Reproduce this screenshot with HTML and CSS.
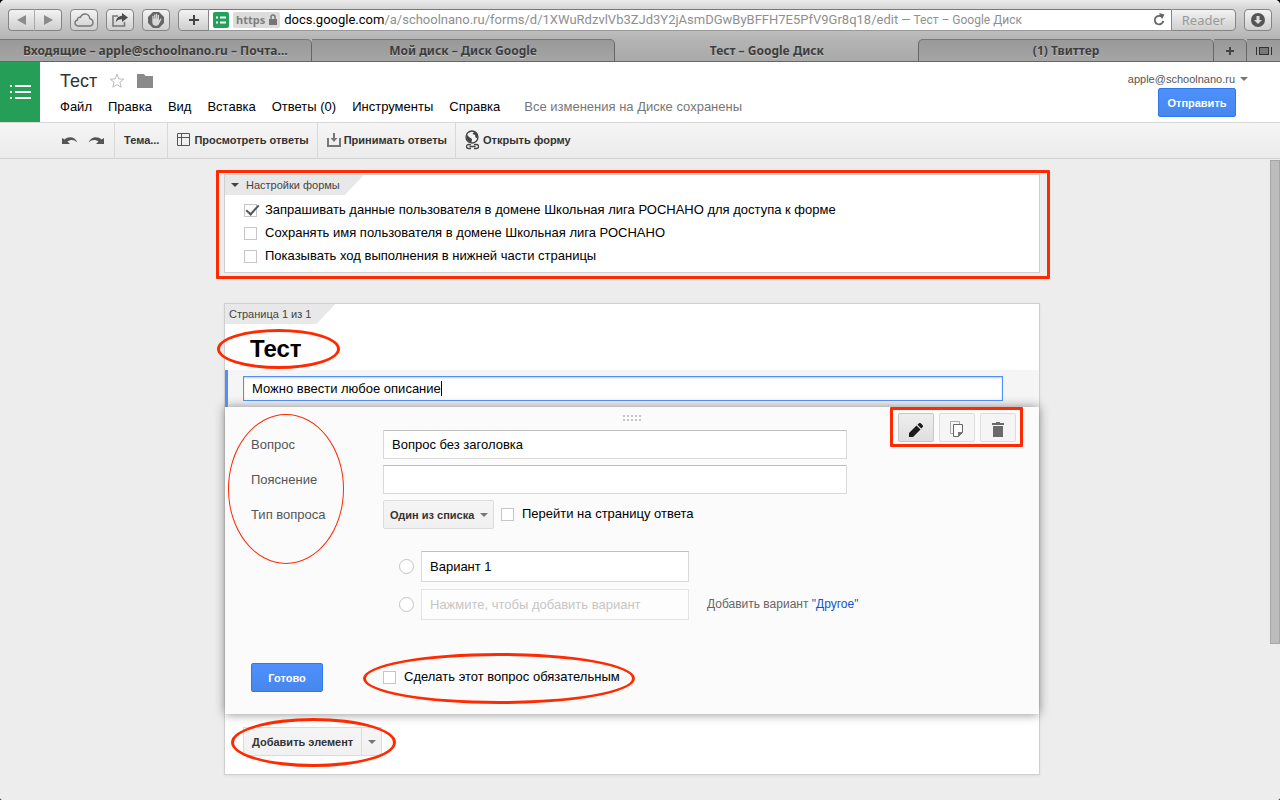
FILE: index.html
```html
<!DOCTYPE html>
<html lang="ru">
<head>
<meta charset="utf-8">
<meta name="viewport" content="width=device-width, initial-scale=1">
<title>Тест – Google Диск</title>
<link rel="stylesheet" href="styles.css">
</head>
<body>
<div class="window">
  <header class="browser">
    <div class="browser-bar">
      <div class="nav-pair">
        <button class="chrome-btn nav-back" aria-label="Назад"><svg width="10" height="10" viewBox="0 0 10 10"><path d="M9 0v10L0 5z" fill="#8b8b8b"/></svg></button>
        <button class="chrome-btn nav-forward" aria-label="Вперёд"><svg width="10" height="10" viewBox="0 0 10 10"><path d="M1 0v10l9-5z" fill="#8b8b8b"/></svg></button>
      </div>
      <button class="chrome-btn solo" aria-label="iCloud"><svg width="20" height="14" viewBox="0 0 20 14" fill="none" stroke="#777" stroke-width="1.4"><path d="M4.500 13C2.200 13 1 11.500 1 10c0-1.700 1-2.800 2.500-3-.2-2 1.300-3 3-2.600C7.300 2 9 1 11 1c2.800 0 4.700 2 4.700 4.600C17.800 6 19 7.500 19 9.300 19 11.500 17.500 13 15.500 13z"/></svg></button>
      <button class="chrome-btn solo" aria-label="Поделиться"><svg width="18" height="14" viewBox="0 0 18 14"><path d="M7 3H2v10h11.500V9" fill="none" stroke="#777" stroke-width="1.600"/><path d="M11 0l6 4.500-6 4.500V6.300C8 6.200 6 7.200 4.800 9.700 5 5.500 7 3 11 2.700z" fill="#4d4d4d"/></svg></button>
      <button class="chrome-btn solo" aria-label="Блокировка"><svg width="16" height="16" viewBox="0 0 16 16"><path d="M5 0h6l5 5v6l-5 5H5l-5-5V5z" fill="#666"/><path d="M4.300 8.500v-4a.6.6 0 0 1 1.300 0V7h.5V3a.6.6 0 0 1 1.300 0v3.500h.5V2.300a.6.6 0 0 1 1.300 0v4.200h.5V3.300a.6.6 0 0 1 1.300 0v5.200l1.200-1.600c.6-.7 1.600-.1 1.200.7L11 12c-.6 1.200-1.500 1.800-3 1.800-2.500 0-3.700-1.500-3.700-3.800z" fill="#d8d8d8"/></svg></button>
      <div class="address">
        <button class="chrome-btn add-bookmark" aria-label="Добавить закладку"><svg width="10" height="10" viewBox="0 0 10 10"><path d="M5 0v10M0 5h10" stroke="#444" stroke-width="2"/></svg></button>
        <div class="url">
          <svg class="site-icon" width="16" height="16" viewBox="0 0 16 16"><rect width="16" height="16" rx="2" fill="#23a05a"/><path d="M3 5.500h2M7 5.500h6M3 10.500h2M7 10.500h6" stroke="#fff" stroke-width="2"/></svg>
          <span class="secure">https <svg width="8" height="11" viewBox="0 0 8 11"><path d="M2 5V3a2 2 0 0 1 4 0v2" fill="none" stroke="#777" stroke-width="1.500"/><rect y="5" width="8" height="6" fill="#777"/></svg></span>
          <span class="url-text"><b>docs.google.com</b>/a/schoolnano.ru/forms/d/1XWuRdzvlVb3ZJd3Y2jAsmDGwByBFFH7E5PfV9Gr8q18/edit<span class="url-title"> — Тест – Google Диск</span></span>
          <button class="reload" aria-label="Обновить"><svg width="12" height="13" viewBox="0 0 12 13"><path d="M9.300 4.200A4.300 4.300 0 1 0 10.300 8" fill="none" stroke="#666" stroke-width="1.800"/><path d="M6 0l5.500 1.500L9 6z" fill="#666"/></svg></button>
        </div>
        <button class="chrome-btn reader">Reader</button>
      </div>
      <button class="chrome-btn solo" aria-label="Загрузки"><svg width="14" height="14" viewBox="0 0 14 14"><circle cx="7" cy="7" r="7" fill="#555"/><path d="M5.500 3h3v4H11l-4 4-4-4h2.500z" fill="#ddd"/></svg></button>
    </div>
    <nav class="tabs">
      <button class="tab first right-edge">Входящие – apple@schoolnano.ru – Почта…</button>
      <button class="tab right-edge">Мой диск – Диск Google</button>
      <button class="tab current">Тест – Google Диск</button>
      <button class="tab last left-edge right-edge">(1) Твиттер</button>
      <button class="tab tab-tool right-edge" aria-label="Новая вкладка"><svg width="8" height="8" viewBox="0 0 8 8"><path d="M4 0v8M0 4h8" stroke="#444" stroke-width="2"/></svg></button>
      <button class="tab tab-tool" aria-label="Все вкладки"><svg width="16" height="8" viewBox="0 0 16 8"><path d="M3 0h10v8H3z" fill="#777"/><path d="M3 .5h10M3 7.500h10M3.500 0v8M12.500 0v8M.5 0v8M15.500 0v8" stroke="#333"/></svg></button>
    </nav>
  </header>

  <header class="app-head">
    <a class="logo" href="#" aria-label="Формы"><svg width="22" height="16" viewBox="0 0 22 16"><path d="M1 2h2M6 2h16M1 8h2M6 8h16M1 14h2M6 14h16" stroke="#fff" stroke-width="2"/></svg></a>
    <div class="doc">
      <div class="doc-title">
        <h1>Тест</h1>
        <button class="icon-btn" aria-label="Пометить"><svg width="16" height="16" viewBox="0 0 16 16"><path d="M8 1.200l1.800 4.700 5 .3-3.900 3.100 1.300 4.900L8 11.500l-4.200 2.700 1.300-4.900L1.200 6.200l5-.3z" fill="none" stroke="#bbb"/></svg></button>
        <button class="icon-btn" aria-label="Папка"><svg width="16" height="14" viewBox="0 0 16 14"><path d="M0 0h7l1.500 2H16v12H0z" fill="#8a8a8a"/></svg></button>
      </div>
      <nav class="menu">
        <button>Файл</button><button>Правка</button><button>Вид</button><button>Вставка</button><button>Ответы (0)</button><button>Инструменты</button><button>Справка</button>
        <span class="saved">Все изменения на Диске сохранены</span>
      </nav>
    </div>
    <div class="account">
      <button class="user">apple@schoolnano.ru <i class="arrow"></i></button>
      <button class="primary send">Отправить</button>
    </div>
  </header>

  <div class="toolbar">
    <div class="tool-group history">
      <button class="icon-btn" aria-label="Отменить"><svg width="16" height="10" viewBox="0 0 16 10"><path d="M0 2l2.500 1.500C6 0 13 0 15.500 6.500 12 3 8 3.500 5.500 5.500L8 8H0z" fill="#555"/></svg></button>
      <button class="icon-btn" aria-label="Повторить"><svg width="16" height="10" viewBox="0 0 16 10"><path d="M16 2l-2.500 1.500C10 0 3 0 .5 6.500 4 3 8 3.500 10.500 5.500L8 8h8z" fill="#555"/></svg></button>
    </div>
    <button class="tool">Тема...</button>
    <button class="tool"><svg width="14" height="14" viewBox="0 0 14 14"><path d="M.5.5h12v12H.5zM.5 4.500h12M4.500.5v12" fill="none" stroke="#555"/></svg>Просмотреть ответы</button>
    <button class="tool"><svg width="14" height="14" viewBox="0 0 14 14"><path d="M1 5v8h12V5" fill="none" stroke="#777" stroke-width="2"/><path d="M7 0v6" stroke="#777" stroke-width="2"/><path d="M3.500 5h7L7 9z" fill="#777"/></svg>Принимать ответы</button>
    <button class="tool"><svg width="15" height="20" viewBox="0 0 15 20"><circle cx="7" cy="7" r="6" fill="#f3f3f3" stroke="#444" stroke-width="1.300"/><path d="M1.500 4L4 7l3 2-.5 3.500C3 12 .8 9 1.500 4zM5 1.200h4.500L7.500 4 10 5l.5 2.500 2 1L13 5 10.500 1.800z" fill="#444"/><path d="M6 14.500H3.500a2 2 0 0 0 0 4H6M9 14.500h2.500a2 2 0 0 1 0 4H9M4.500 16.500h6" fill="none" stroke="#f3f3f3" stroke-width="3"/><path d="M6 14.500H3.500a2 2 0 0 0 0 4H6M9 14.500h2.500a2 2 0 0 1 0 4H9M4.500 16.500h6" fill="none" stroke="#444" stroke-width="1.300"/></svg>Открыть форму</button>
  </div>

  <div class="workspace">
    <main class="canvas">
      <section class="card settings">
        <button class="corner-tab toggle"><i class="arrow dark"></i>Настройки формы</button>
        <div class="setting-list">
          <label class="check"><input type="checkbox" checked><span>Запрашивать данные пользователя в домене Школьная лига РОСНАНО для доступа к форме</span></label>
          <label class="check"><input type="checkbox"><span>Сохранять имя пользователя в домене Школьная лига РОСНАНО</span></label>
          <label class="check"><input type="checkbox"><span>Показывать ход выполнения в нижней части страницы</span></label>
        </div>
        <span class="mark mark-settings"></span>
      </section>

      <section class="card page">
        <div class="corner-tab page-no">Страница 1 из 1</div>
        <h2 class="form-title"><span>Тест<span class="mark mark-title"></span></span></h2>
        <div class="description">
          <input type="text" aria-label="Описание" value="Можно ввести любое описание">
          <span class="caret"></span>
        </div>

        <div class="editor">
          <svg class="grip" width="18" height="6" viewBox="0 0 18 6"><path d="M0 1h18M0 5h18" stroke="#c4c4c4" stroke-width="2" stroke-dasharray="2 2"/></svg>
          <div class="actions">
            <button class="action pressed" aria-label="Изменить"><svg width="14" height="14" viewBox="0 0 14 14"><path d="M0 14v-4l7.500-7.500 4 4L4 14zM8.500 1.700L10 .3c.6-.4 1.200-.4 1.700 0l2 2c.4.500.4 1.100 0 1.700l-1.400 1.400z" fill="#1b1b1b"/></svg></button>
            <button class="action" aria-label="Создать копию"><svg width="14" height="17" viewBox="0 0 14 17"><path d="M3 12.500H.5V.5h9V3" fill="none" stroke="#aaa"/><path d="M3.500 3.500h9v8l-4 4h-5z" fill="#fff" stroke="#666"/><path d="M8 11h5l-5 5z" fill="#777"/></svg></button>
            <button class="action" aria-label="Удалить"><svg width="12" height="15" viewBox="0 0 12 15"><path d="M4 0h4v1h4v2H0V1h4zM1 4h10v11H1z" fill="#6b6b6b"/></svg></button>
            <span class="mark mark-actions"></span>
          </div>

          <div class="fields">
            <div class="field"><label for="question">Вопрос</label><input id="question" type="text" value="Вопрос без заголовка"></div>
            <div class="field"><label for="hint">Пояснение</label><input id="hint" type="text"></div>
            <div class="field"><label for="kind">Тип вопроса</label>
              <span class="select-wrap"><select id="kind"><option>Один из списка</option></select><i class="arrow"></i></span>
              <label class="check jump"><input type="checkbox"><span>Перейти на страницу ответа</span></label>
            </div>
            <span class="mark mark-labels"></span>
          </div>

          <div class="choices">
            <div class="choice"><input type="radio" name="choice" aria-label="Вариант 1"><input type="text" aria-label="Текст варианта 1" value="Вариант 1"></div>
            <div class="choice"><input type="radio" name="choice" aria-label="Новый вариант"><input class="ghost" type="text" aria-label="Новый вариант" placeholder="Нажмите, чтобы добавить вариант">
              <span class="other">Добавить вариант <a href="#">"Другое"</a></span></div>
          </div>

          <div class="finish">
            <button class="primary done">Готово</button>
            <label class="check required"><input type="checkbox"><span>Сделать этот вопрос обязательным</span><span class="mark mark-required"></span></label>
          </div>
        </div>

        <div class="add-row">
          <div class="split">
            <button class="split-main">Добавить элемент</button><button class="split-more" aria-label="Выбрать тип элемента"><i class="arrow"></i></button>
            <span class="mark mark-add"></span>
          </div>
        </div>
      </section>
    </main>
    <div class="scroll-track"><div class="scroll-thumb"></div></div>
  </div>
</div>
</body>
</html>
```
FILE: styles.css
```css
* { box-sizing: border-box; }
html { background: #000; }
body {
  margin: 0;
  font-family: "Liberation Sans", Arial, sans-serif;
  font-size: 13px;
  line-height: 16px;
  color: #000;
}
button, input, select { font: inherit; color: inherit; margin: 0; }
button { padding: 0; border: 0; background: none; white-space: nowrap; }
svg { display: block; flex: none; }

.window {
  min-height: 100vh;
  display: flex;
  flex-direction: column;
  background: #ededed;
  border-radius: 5px 5px 2px 2px;
  overflow: hidden;
}

/* Browser chrome */
.browser {
  background: linear-gradient(#ececec, #d8d8d8 8px, #b4b4b4 39px, #a9a9a9);
  font-family: "Noto Sans", sans-serif;
}
.browser-bar {
  height: 39px;
  display: flex;
  align-items: center;
  gap: 8px;
  padding: 0 8px;
}
.chrome-btn {
  height: 22px;
  display: flex;
  align-items: center;
  justify-content: center;
  border: 1px solid #858585;
  border-radius: 4px;
  background: linear-gradient(#f3f3f3, #cfcfcf);
}
.nav-pair { display: flex; }
.nav-pair .chrome-btn { width: 27px; }
.nav-pair .nav-back { border-radius: 4px 0 0 4px; border-right-color: #aaa; }
.nav-pair .nav-forward { border-radius: 0 4px 4px 0; border-left: 0; }
.solo { width: 28px; }
.address { flex: 1; display: flex; min-width: 0; }
.add-bookmark { width: 31px; border-radius: 4px 0 0 4px; }
.url {
  flex: 1;
  min-width: 0;
  display: flex;
  align-items: center;
  gap: 4px;
  padding: 0 6px 0 4px;
  border-top: 1px solid #777;
  border-bottom: 1px solid #999;
  background: #fff;
}
.secure {
  display: flex;
  align-items: center;
  gap: 4px;
  height: 16px;
  padding: 0 3px;
  border-radius: 2px;
  background: #dcdcdc;
  color: #808080;
  font-size: 11px;
  font-weight: bold;
}
.url-text {
  flex: 1;
  overflow: hidden;
  white-space: nowrap;
  color: #8f8f8f;
  font-family: Roboto, "Noto Sans", sans-serif;
  font-size: 13px;
}
.url-text b { font-weight: normal; color: #000; }
.url-title { font-size: 12px; }
.reader { width: 65px; border-radius: 0 4px 4px 0; color: #999; font-size: 13px; }

.tabs { display: flex; height: 23px; border-bottom: 1px solid #666; }
.tab {
  flex: 304 1 0;
  min-width: 0;
  display: flex;
  align-items: center;
  justify-content: center;
  border-top: 1px solid #777;
  background: linear-gradient(#999, #a5a5a5);
  color: #3d3d3d;
  font-size: 12px;
  font-weight: bold;
  text-shadow: 0 1px 0 #c4c4c4;
}
.tab.first { flex-grow: 312; }
.tab.last { flex-grow: 295; }
.tab.current { border-top-color: transparent; background: none; }
.tab.right-edge { border-right: 1px solid #666; border-top-right-radius: 5px; }
.tab.left-edge { border-left: 1px solid #666; border-top-left-radius: 5px; }
.tab.tab-tool { flex: 0 0 33px; }

/* Document header */
.app-head {
  display: flex;
  min-height: 61px;
  background: #fff;
  border-bottom: 1px solid #d8d8d8;
}
.logo {
  width: 40px;
  display: flex;
  align-items: center;
  justify-content: center;
  background: #259e58;
}
.doc { flex: 1; padding: 8px 0 0 20px; }
.doc-title { display: flex; align-items: center; gap: 12px; height: 22px; }
.doc-title h1 { margin: 0; font-size: 18px; font-weight: normal; line-height: 22px; color: #333; }
.menu { display: flex; align-items: center; gap: 16px; padding-top: 7px; }
.saved { margin-left: 8px; color: #777; }
.account { display: flex; flex-direction: column; align-items: flex-end; padding: 8px 32px 0 0; }
.user { display: flex; align-items: center; gap: 5px; height: 18px; font-size: 11px; color: #555; }
.arrow {
  width: 0;
  height: 0;
  border: 4px solid transparent;
  border-top-color: #777;
  border-bottom: 0;
}
.arrow.dark { border-top-color: #444; }
.primary {
  height: 29px;
  border: 1px solid #3079ed;
  border-radius: 2px;
  background: linear-gradient(#4d90fe, #4787ed);
  color: #fff;
  font-size: 11px;
  font-weight: bold;
}
.send { width: 78px; margin-right: 12px; }

.toolbar {
  display: flex;
  height: 36px;
  padding-left: 53px;
  background: linear-gradient(#f5f5f5, #ebebeb);
  border-bottom: 1px solid #d2d2d2;
}
.tool-group { display: flex; align-items: center; gap: 10px; padding: 0 10px 0 9px; }
.tool {
  display: flex;
  align-items: center;
  gap: 3px;
  padding: 0 8px 1px 9px;
  border-left: 1px solid #d8d8d8;
  font-size: 11px;
  font-weight: bold;
  color: #333;
}

/* Form canvas */
.workspace { flex: 1; display: flex; }
.canvas { flex: 1; padding: 15px 24px 25px; }
.scroll-track { width: 16px; padding-top: 1px; }
.scroll-thumb {
  width: 10px;
  height: 484px;
  margin-left: auto;
  border: 1px solid #a6a6a6;
  background: #bcbcbc;
}
.card {
  position: relative;
  max-width: 816px;
  margin: 0 auto;
  background: #fff;
  border: 1px solid #cfcfcf;
}
.corner-tab {
  display: flex;
  align-items: center;
  width: max-content;
  height: 20px;
  padding: 0 24px 1px 4px;
  background: #e8e8e8;
  clip-path: polygon(0 0, 100% 0, calc(100% - 19px) 100%, 0 100%);
  color: #444;
  font-size: 11px;
}
.toggle { gap: 7px; padding-left: 6px; }
.setting-list { display: flex; flex-direction: column; gap: 7px; padding: 7px 19px 8px; }
.check { display: flex; align-items: center; gap: 8px; }
input[type="checkbox"] {
  appearance: none;
  flex: none;
  width: 13px;
  height: 13px;
  border: 1px solid #c6c6c6;
  background: #fff;
}
input[type="checkbox"]:checked::after {
  content: "";
  display: block;
  width: 5px;
  height: 11px;
  margin: -3px 0 0 4px;
  border: solid #555;
  border-width: 0 2px 2px 0;
  transform: rotate(42deg);
}

.page { margin-top: 30px; box-shadow: 0 1px 3px #ddd; }
.form-title { margin: 0; padding: 10px 25px 6px; font-size: 24px; line-height: 30px; }
.form-title > span { position: relative; }
.description {
  position: relative;
  padding: 6px 36px 6px 15px;
  border-left: 3px solid #4d90fe;
  background: #f5f5f5;
}
input[type="text"] {
  display: block;
  padding: 0 8px;
  border: 1px solid #d9d9d9;
  border-top-color: #c0c0c0;
  border-radius: 0;
  background: #fff;
  outline: 0;
}
.description input[type="text"] {
  width: 100%;
  height: 25px;
  border-color: #4d90fe;
  box-shadow: inset 0 1px 2px #ccc;
}
.caret { position: absolute; left: 213px; top: 11px; width: 1px; height: 15px; background: #000; }

.editor {
  position: relative;
  padding: 23px 26px 22px;
  background: #fbfbfb;
  box-shadow: 0 0 10px #888;
}
.grip { position: absolute; top: 8px; left: calc(50% - 9px); }
.actions { position: absolute; top: 6px; right: 23px; display: flex; gap: 5px; }
.action {
  display: flex;
  align-items: center;
  justify-content: center;
  width: 36px;
  height: 29px;
  padding-top: 4px;
  border: 1px solid #dcdcdc;
  border-radius: 2px;
  background: #f5f5f5;
}
.action.pressed { border-color: #c6c6c6; background: linear-gradient(#eee, #dfdfdf); }
.fields { position: relative; display: flex; flex-direction: column; gap: 6px; }
.field { display: flex; align-items: center; height: 29px; }
.field > label:first-child { width: 132px; color: #555; }
.field > input { width: 464px; height: 29px; }
.select-wrap { position: relative; display: flex; height: 29px; }
select {
  appearance: none;
  width: 111px;
  padding: 0 16px 0 6px;
  border: 1px solid #dcdcdc;
  border-radius: 2px;
  background: linear-gradient(#f5f5f5, #f0f0f0);
  color: #333;
  font-size: 11px;
  font-weight: bold;
}
.select-wrap .arrow { position: absolute; right: 6px; top: 13px; pointer-events: none; }
.jump { margin-left: 7px; }
.choices { display: flex; flex-direction: column; gap: 7px; padding: 22px 0 0 148px; }
.choice { display: flex; align-items: center; }
input[type="radio"] {
  appearance: none;
  width: 15px;
  height: 15px;
  border: 1px solid #c4c4c4;
  border-radius: 50%;
  background: #fff;
}
.choice input[type="text"] { width: 268px; height: 31px; margin-left: 7px; }
.choice input.ghost { border-color: #e3e3e3; background: #fdfdfd; }
.ghost::placeholder { color: #c6c6c6; opacity: 1; }
.other { margin-left: 18px; padding-bottom: 2px; font-size: 12px; color: #666; }
.other a { color: #15c; text-decoration: none; }
.finish { display: flex; align-items: center; gap: 60px; padding-top: 43px; }
.done { width: 72px; }
.required { position: relative; }
.jump > span, .required > span:not(.mark) { padding-bottom: 2px; }

.add-row { padding: 13px 18px 18px; }
.split { position: relative; display: flex; width: max-content; }
.split-main, .split-more {
  height: 29px;
  border: 1px solid #dcdcdc;
  background: linear-gradient(#f5f5f5, #f1f1f1);
}
.split-main { padding: 0 8px; font-size: 11px; font-weight: bold; color: #333; }
.split-more { display: flex; align-items: center; justify-content: center; width: 20px; border-left: 0; }

/* Red annotations drawn over the form */
.mark { position: absolute; z-index: 2; border: 3px solid #ff2a00; border-radius: 50%; pointer-events: none; }
.mark-settings { inset: -5px -11px -7px -9px; border-radius: 1px; }
.mark-title { width: 123px; height: 40px; left: -33px; top: -6px; }
.mark-actions { inset: -6px -7px -5px -8px; border-radius: 1px; }
.mark-labels { width: 116px; height: 150px; left: -23px; top: -16px; border-width: 1px; }
.mark-required { inset: -16px -15px -17px -20px; }
.mark-add { inset: -9px -14px -11px -12px; }
```
